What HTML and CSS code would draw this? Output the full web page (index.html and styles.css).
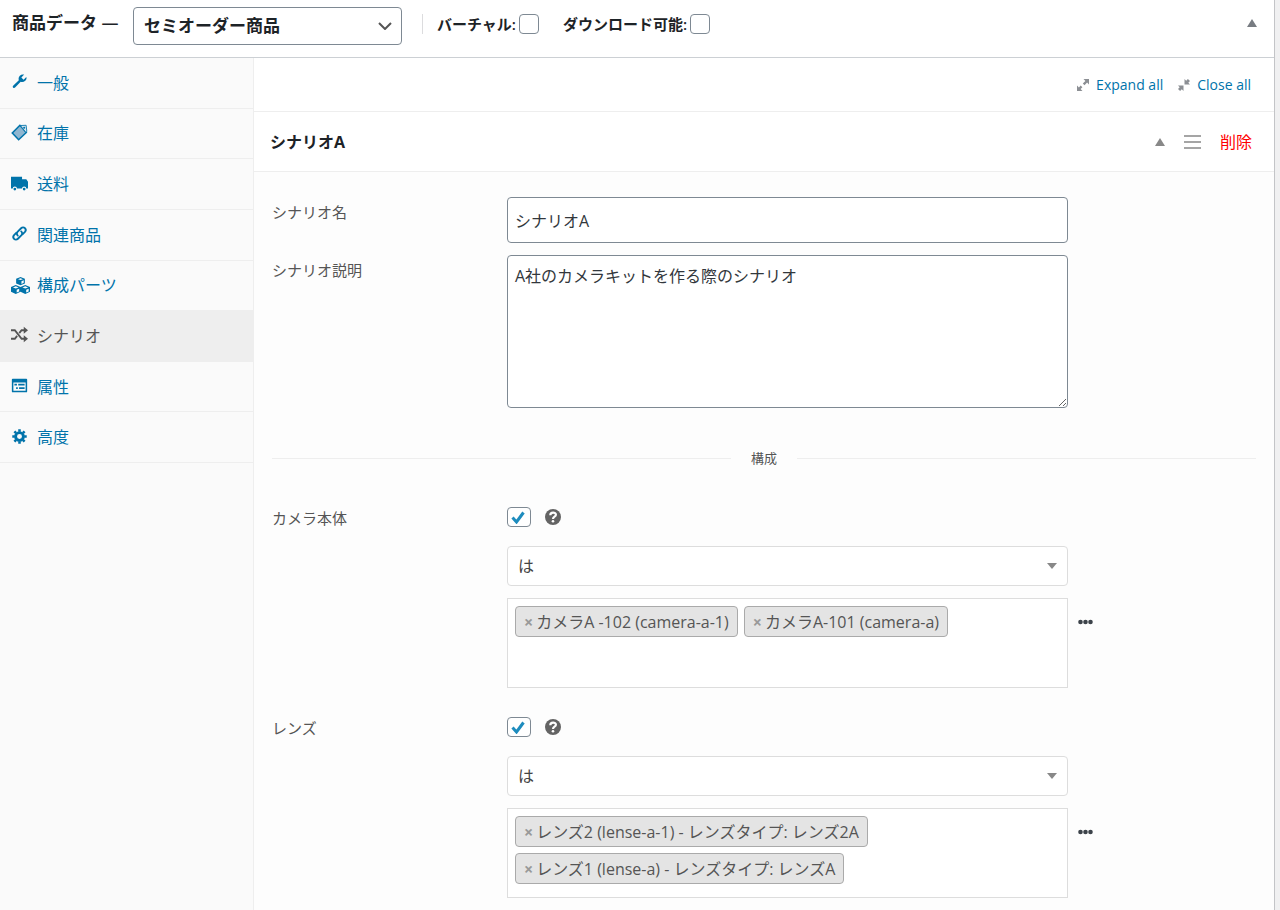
FILE: index.html
```html
<!DOCTYPE html>
<html lang="ja">
<head>
<meta charset="utf-8">
<title>商品データ</title>
<link rel="stylesheet" href="styles.css">
</head>
<body>
<div class="panel">
  <header class="panel-head">
    <label class="panel-title" for="product-type">商品データ —</label>
    <select class="type-select" id="product-type"><option>セミオーダー商品</option></select>
    <div class="flags">
      <label class="flag">バーチャル:<input class="box" type="checkbox"></label>
      <label class="flag">ダウンロード可能:<input class="box" type="checkbox"></label>
    </div>
    <button class="icon-button head-toggle" type="button" aria-label="パネルを閉じる"><svg width="10" height="8" viewBox="0 0 10 8"><path d="M5 0l5 8H0z" fill="#787c82"/></svg></button>
  </header>
  <div class="panel-body">
    <nav class="tabs">
      <a class="tab" href="#general"><svg class="tab-icon" viewBox="0 0 20 20"><path fill="currentColor" d="M16.700 9.100c-1.400 1.400-3.500 1.800-5.300 1.200l-6.600 6.900c-.6.600-1.500.700-2.200.1-.7-.7-.7-1.600-.1-2.300l6.700-6.600C8.600 6.500 9 4.500 10.400 3.100c1.400-1.400 3.400-1.800 5.100-1.200l-3.300 3.300 2.600 2.600 3.200-3.200c.6 1.600.2 3.200-1.300 4.500z"/></svg>一般</a>
      <a class="tab" href="#stock"><svg class="tab-icon" viewBox="0 0 20 20"><path fill="#8fb6d0" stroke="currentColor" stroke-width="1.800" d="M10.500 1.500L1.500 10.500l7.500 8 9-8.500z"/><path fill="#d5e5ef" stroke="currentColor" stroke-width="1" d="M11 1.800l6.800-.3.800 7-1 1.500z"/><circle cx="15.500" cy="4.300" r="1.200" fill="currentColor"/></svg>在庫</a>
      <a class="tab" href="#shipping"><svg class="tab-icon" viewBox="0 0 20 20"><path fill="currentColor" d="M0 2h13v3h5l2 3v8h-2a2.500 2.500 0 0 0-5 0H7a2.500 2.500 0 0 0-5 0H0z"/><circle cx="4.500" cy="16.500" r="1.600" fill="currentColor"/><circle cx="15.500" cy="16.500" r="1.600" fill="currentColor"/></svg>送料</a>
      <a class="tab" href="#linked"><svg class="tab-icon" viewBox="0 0 20 20"><g fill="none" stroke="currentColor" stroke-width="2.200" stroke-linecap="round"><path d="M8 12.500c-1.600-1.400-1.400-3.400-.1-4.700l4-4c1.300-1.300 3.300-1.300 4.500 0s1.200 3.100 0 4.400l-2.600 2.600"/><path d="M12 7.500c1.600 1.400 1.400 3.400.1 4.700l-4 4c-1.300 1.300-3.300 1.300-4.500 0s-1.200-3.100 0-4.400l2.600-2.600"/></g></svg>関連商品</a>
      <a class="tab" href="#components"><svg class="tab-icon tab-icon-large" viewBox="0 0 20 20"><path fill="currentColor" d="M10 1l4.600 1.800v5L10 9.800 5.400 7.800v-5zM5 9.500l5 2v5L5 19l-5-2.500v-5zM15 9.500l5 2v5L15 19l-5-2.500v-5z"/><g fill="#fafafa"><path d="M10 2.300l2.600 1-2.600 1-2.600-1zM5 10.800l3 1.200-3 1.200L2 12zM15 10.800l3 1.200-3 1.200-3-1.200zM11 5.500l2.400-1v2.700L11 8.300zM6 14.500l2.600-1v2.700L6 17.400zM16 14.500l2.600-1v2.700L16 17.400z"/></g></svg>構成パーツ</a>
      <a class="tab tab-active" href="#scenarios" aria-current="page"><svg class="tab-icon" viewBox="0 0 20 20"><path fill="none" stroke="currentColor" stroke-width="2.200" d="M0 5h4.500L12.500 15H16M0 15h4.500l2.700-3.400M9.700 8.400L12.500 5H16"/><path fill="currentColor" d="M15 1l5 4-5 4zM15 11l5 4-5 4z"/></svg>シナリオ</a>
      <a class="tab" href="#attributes"><svg class="tab-icon" viewBox="0 0 20 20"><path fill="currentColor" fill-rule="evenodd" d="M2 2h16a1 1 0 0 1 1 1v14a1 1 0 0 1-1 1H2a1 1 0 0 1-1-1V3a1 1 0 0 1 1-1zm.8 4.500v9.700h14.400V6.500zM4 8h3v2H4zm4.500 0H16v2H8.500zM6 12h2v2H6zm3.500 0H16v2H9.500z"/></svg>属性</a>
      <a class="tab" href="#advanced"><svg class="tab-icon" viewBox="0 0 20 20"><circle cx="10" cy="10" r="4.600" fill="none" stroke="currentColor" stroke-width="3.400"/><path stroke="currentColor" stroke-width="3" d="M10 1.500v3M10 15.500v3M1.500 10h3M15.500 10h3M4 4l2 2M14 14l2 2M4 16l2-2M14 6l2-2"/></svg>高度</a>
    </nav>
    <main class="content">
      <div class="toolbar">
        <a class="tool" href="#expand"><svg width="12" height="12" viewBox="0 0 12 12"><path fill="#8c8f94" d="M6.500 0H12v5.500l-1.900-1.900-2.600 2.600-1.700-1.700 2.600-2.600zM0 6.500l1.900 1.900 1.800-1.800 1.700 1.700-1.800 1.800L5.500 12H0z"/></svg>Expand all</a>
        <a class="tool" href="#close"><svg width="12" height="12" viewBox="0 0 12 12"><path fill="#8c8f94" d="M6.500 0l1.700 1.700L9.900 0 12 2.100l-1.700 1.700L12 5.500H6.500zM0 6.500h5.500V12l-1.700-1.700L2.100 12 0 9.900l1.700-1.700z"/></svg>Close all</a>
      </div>
      <div class="scenario-head">
        <h2 class="scenario-title">シナリオA</h2>
        <div class="scenario-actions">
          <button class="icon-button" type="button" aria-label="折りたたむ"><svg width="10" height="8" viewBox="0 0 10 8"><path d="M5 0l5 8H0z" fill="#888"/></svg></button>
          <button class="icon-button" type="button" aria-label="並べ替え"><svg width="17" height="14" viewBox="0 0 17 14"><path stroke="#888" stroke-width="1.500" d="M0 1h17M0 7h17M0 13h17"/></svg></button>
          <a class="remove" href="#remove">削除</a>
        </div>
      </div>
      <form class="form">
        <div class="row">
          <label class="row-label" for="name">シナリオ名</label>
          <input class="text" id="name" type="text" value="シナリオA">
        </div>
        <div class="row">
          <label class="row-label" for="description">シナリオ説明</label>
          <textarea class="text text-area" id="description">A社のカメラキットを作る際のシナリオ</textarea>
        </div>
        <div class="divider">構成</div>
        <div class="row component">
          <label class="row-label component-label" for="camera">カメラ本体</label>
          <div class="fields">
            <div class="check-line">
              <input class="box box-wide" id="camera" type="checkbox" checked>
              <button class="icon-button" type="button" aria-label="ヘルプ"><svg width="16" height="16" viewBox="0 0 16 16"><circle cx="8" cy="8" r="8" fill="#646464"/><path fill="none" stroke="#fff" stroke-width="2.200" d="M5.300 6.200c0-3.600 5.600-3.300 5.600-.4C10.900 7.800 8 7.600 8 9.900"/><circle cx="8" cy="12.200" r="1.300" fill="#fff"/></svg></button>
            </div>
            <select class="condition" aria-label="カメラ本体の条件"><option>は</option></select>
            <ul class="chips">
              <li class="chip"><button class="chip-remove" type="button">×</button>カメラA -102 (camera-a-1)</li>
              <li class="chip"><button class="chip-remove" type="button">×</button>カメラA-101 (camera-a)</li>
            </ul>
          </div>
          <button class="icon-button more" type="button" aria-label="その他"><svg width="15" height="6" viewBox="0 0 15 6"><g fill="#3c434a"><circle cx="2.500" cy="3" r="2.300"/><circle cx="7.500" cy="3" r="2.300"/><circle cx="12.500" cy="3" r="2.300"/></g></svg></button>
        </div>
        <div class="row component">
          <label class="row-label component-label" for="lens">レンズ</label>
          <div class="fields">
            <div class="check-line">
              <input class="box box-wide" id="lens" type="checkbox" checked>
              <button class="icon-button" type="button" aria-label="ヘルプ"><svg width="16" height="16" viewBox="0 0 16 16"><circle cx="8" cy="8" r="8" fill="#646464"/><path fill="none" stroke="#fff" stroke-width="2.200" d="M5.300 6.200c0-3.600 5.600-3.300 5.600-.4C10.900 7.800 8 7.600 8 9.900"/><circle cx="8" cy="12.200" r="1.300" fill="#fff"/></svg></button>
            </div>
            <select class="condition" aria-label="レンズの条件"><option>は</option></select>
            <ul class="chips">
              <li class="chip"><button class="chip-remove" type="button">×</button>レンズ2 (lense-a-1) - レンズタイプ: レンズ2A</li>
              <li class="chip"><button class="chip-remove" type="button">×</button>レンズ1 (lense-a) - レンズタイプ: レンズA</li>
            </ul>
          </div>
          <button class="icon-button more" type="button" aria-label="その他"><svg width="15" height="6" viewBox="0 0 15 6"><g fill="#3c434a"><circle cx="2.500" cy="3" r="2.300"/><circle cx="7.500" cy="3" r="2.300"/><circle cx="12.500" cy="3" r="2.300"/></g></svg></button>
        </div>
      </form>
    </main>
  </div>
</div>
</body>
</html>
```
FILE: styles.css
```css
* { box-sizing: border-box; }

body {
  margin: 0;
  background: #f0f0f1;
  color: #1d2327;
  font: 16px/24px "Open Sans", "Noto Sans CJK JP", sans-serif;
}

a { color: #0073aa; text-decoration: none; }

input, select, textarea, button { font: inherit; color: inherit; margin: 0; }

.panel {
  display: flex;
  flex-direction: column;
  min-height: 100vh;
  margin-right: 5px;
  border-right: 1px solid #c3c4c7;
  background: #fff;
}

.panel-head {
  display: flex;
  align-items: flex-start;
  padding: 7px 17px 12px 12px;
  border-bottom: 1px solid #ccd0d4;
}

.panel-title {
  width: 121px;
  padding-top: 4px;
  font-size: 17px;
  font-weight: 600;
  white-space: nowrap;
}

.type-select {
  width: 269px;
  height: 38px;
  padding: 0 10px;
  appearance: none;
  border: 1px solid #7e8993;
  border-radius: 4px;
  background: #fff url("data:image/svg+xml,%3Csvg xmlns='http://www.w3.org/2000/svg' width='14' height='8'%3E%3Cpath d='M1 1l6 6 6-6' fill='none' stroke='%23555' stroke-width='2'/%3E%3C/svg%3E") no-repeat right 9px center;
  font-size: 17px;
  font-weight: 600;
}

.flags {
  display: flex;
  gap: 24px;
  height: 20px;
  margin: 7px 0 0 20px;
  padding-left: 14px;
  border-left: 1px solid #dcdcde;
}

.flag {
  display: flex;
  align-items: center;
  gap: 3px;
  font-size: 15px;
  line-height: 20px;
  font-weight: 600;
  white-space: nowrap;
}

.box {
  width: 20px;
  height: 20px;
  appearance: none;
  border: 1px solid #7e8993;
  border-radius: 4px;
  background: #fff;
}

.box-wide { width: 24px; }

.box:checked {
  background: #fff url("data:image/svg+xml,%3Csvg xmlns='http://www.w3.org/2000/svg' width='14' height='13'%3E%3Cpath d='M1.500 6.500l4 4.500L12.500 1.500' fill='none' stroke='%231e8cbe' stroke-width='3'/%3E%3C/svg%3E") no-repeat 3px 3px;
}

.icon-button {
  display: flex;
  padding: 0;
  border: 0;
  background: none;
}

.head-toggle { margin: 12px 0 0 auto; }

.panel-body {
  display: flex;
  flex: 1;
  background: linear-gradient(90deg, #fafafa 253px, #eee 253px, #eee 254px, #fdfdfd 254px);
}

.tabs {
  flex: 0 0 254px;
  display: grid;
  grid-template-rows: repeat(8, 1fr);
  height: 405px;
}

.tab {
  display: flex;
  align-items: center;
  gap: 9px;
  margin-right: 1px;
  padding-left: 11px;
  border-bottom: 1px solid #eee;
}

.tab-active { background: #eee; color: #555; }

.tab-icon { width: 17px; height: 17px; margin-bottom: 2px; }

.tab-icon-large { width: 19px; height: 19px; margin: 0 -2px 0 0; }

.content { flex: 1; min-width: 0; }

.toolbar {
  display: flex;
  justify-content: flex-end;
  gap: 15px;
  height: 54px;
  padding-right: 23px;
  border-bottom: 1px solid #eee;
  background: #fff;
  font-size: 14px;
}

.tool { display: flex; align-items: center; gap: 7px; }

.scenario-head {
  display: flex;
  align-items: center;
  justify-content: space-between;
  height: 60px;
  padding: 0 22px 0 16px;
  border-bottom: 1px solid #eee;
  background: #fff;
}

.scenario-title { margin: 0; font-size: 16px; font-weight: 700; }

.scenario-actions { display: flex; align-items: center; gap: 19px; }

.remove { color: #f00; }

.form { padding: 25px 18px 13px; }

.row {
  display: grid;
  grid-template-columns: 235px minmax(0, 561fr) minmax(0, 188fr);
  margin-bottom: 12px;
}

.row-label { padding-top: 3px; font-size: 15px; color: #555; }

.text {
  width: 100%;
  height: 46px;
  padding: 0 7px;
  border: 1px solid #7e8993;
  border-radius: 4px;
  background: #fff;
  color: #32373c;
}

.text-area { display: block; height: 153px; padding: 8px 7px; }

.divider {
  display: flex;
  align-items: center;
  gap: 20px;
  margin: 38px 0 37px;
  font-size: 13px;
  color: #555;
}

.divider::before, .divider::after { content: ""; flex: 1; height: 1px; background: #eee; }

.component { margin-bottom: 29px; }

.component:last-child { margin-bottom: 0; }

.component-label { margin-top: -1px; padding-top: 0; }

.fields { display: grid; gap: 12px; }

.check-line { display: flex; align-items: center; gap: 14px; height: 20px; margin-bottom: 7px; }

.condition {
  width: 100%;
  height: 40px;
  padding: 0 10px;
  appearance: none;
  border: 1px solid #ddd;
  border-radius: 4px;
  background: #fff url("data:image/svg+xml,%3Csvg xmlns='http://www.w3.org/2000/svg' width='10' height='6'%3E%3Cpath d='M0 0h10L5 6z' fill='%23888'/%3E%3C/svg%3E") no-repeat right 10px center;
  color: #444;
}

.chips {
  display: flex;
  flex-wrap: wrap;
  align-content: flex-start;
  gap: 6px;
  min-height: 90px;
  margin: 0;
  padding: 7px;
  border: 1px solid #ddd;
  background: #fff;
  list-style: none;
}

.chip {
  display: flex;
  align-items: center;
  height: 31px;
  padding: 1px 8px 0;
  border: 1px solid #aaa;
  border-radius: 4px;
  background: #e4e4e4;
  color: #555;
  white-space: nowrap;
}

.chip-remove { padding: 0 3px 0 0; border: 0; background: none; color: #999; font-weight: 700; }

.more { align-self: start; justify-self: start; margin: 112px 0 0 10px; }
```
